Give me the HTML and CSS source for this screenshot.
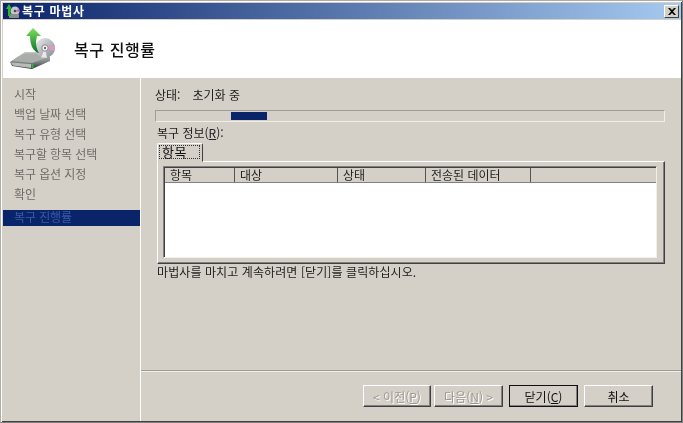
FILE: index.html
```html
<!DOCTYPE html>
<html lang="ko">
<head>
<meta charset="utf-8">
<title>복구 마법사</title>
<link rel="stylesheet" href="styles.css">
</head>
<body>
<div class="window">
  <div class="titlebar">
    <svg class="title-icon" width="16" height="16" viewBox="0 0 16 16">
      <circle cx="11" cy="8" r="4.500" fill="#c4c4ce"/>
      <path d="M11 8l4-2 .5 3z" fill="#c86aa0"/>
      <circle cx="11" cy="8" r="1.300" fill="#4a4a55"/>
      <rect x="5" y="11" width="10" height="4" rx="1" fill="#8a8f88"/>
      <path d="M4 13V6H2l3-5 3 5H6.500v7z" fill="#35b52f"/>
    </svg>
    <span class="title-text">복구 마법사</span>
    <span class="close-btn">
      <svg width="8" height="7" viewBox="0 0 8 7"><path d="M0 0h2l2 2 2-2h2L5 3.500 8 7H6L4 5 2 7H0l3-3.500z" fill="#000"/></svg>
    </span>
  </div>
  <div class="header">
    <svg class="header-icon" width="50" height="50" viewBox="0 0 50 50">
      <defs>
        <linearGradient id="disc" x1="0" y1="0" x2="1" y2="1">
          <stop offset="0" stop-color="#f0f0f2"/>
          <stop offset=".5" stop-color="#b9bbc0"/>
          <stop offset="1" stop-color="#85888e"/>
        </linearGradient>
        <linearGradient id="drive" x1="0" y1="0" x2="0" y2="1">
          <stop offset="0" stop-color="#c4c8c5"/>
          <stop offset=".6" stop-color="#7d8380"/>
          <stop offset="1" stop-color="#2e3234"/>
        </linearGradient>
        <linearGradient id="arrow" x1="0" y1="0" x2="0" y2="1">
          <stop offset="0" stop-color="#7ce05f"/>
          <stop offset="1" stop-color="#0a7424"/>
        </linearGradient>
      </defs>
      <path d="M2 37L17 27H28L42 32V36L24 44 4 41z" fill="url(#drive)"/>
      <path d="M4 36L17 28.500H28L40 32.500 24 38z" fill="#a9aeab"/>
      <path d="M3 37.500L23 39V43L5 40.500z" fill="#b8bcb9"/>
      <rect x="23.500" y="39" width="2" height="4" fill="#2fb53a"/>
      <circle cx="37" cy="23" r="10" fill="url(#disc)"/>
      <path d="M37 23l10-3-.6 6z" fill="#d89cc4"/>
      <path d="M37 23l-4 9.500 6 .3z" fill="#e8e8ea"/>
      <circle cx="37" cy="23" r="3.200" fill="#f5f5f5" stroke="#8a8a8e"/>
      <circle cx="37" cy="23" r="1.200" fill="#6e6e72"/>
      <path d="M25 3L33 11H29C28 16 27 21 31 28 26 27 22 21 22 11H18z" fill="url(#arrow)"/>
    </svg>
    <h1 class="header-title">복구 진행률</h1>
  </div>
  <div class="body">
    <nav class="sidebar">
      <div class="step">시작</div>
      <div class="step">백업 날짜 선택</div>
      <div class="step">복구 유형 선택</div>
      <div class="step">복구할 항목 선택</div>
      <div class="step">복구 옵션 지정</div>
      <div class="step">확인</div>
      <div class="step step-current">복구 진행률</div>
    </nav>
    <main class="content">
      <div class="main-area">
        <div class="status"><span class="status-label">상태:</span><span>초기화 중</span></div>
        <div class="progress"><div class="progress-chunk"></div></div>
        <div class="info-label">복구 정보(<u>R</u>):</div>
        <div class="tabs"><div class="tab"><span class="tab-focus">항목</span></div></div>
        <div class="tab-pane">
          <div class="list">
            <div class="list-head">
              <div class="col col-1">항목</div>
              <div class="col col-2">대상</div>
              <div class="col col-3">상태</div>
              <div class="col col-4">전송된 데이터</div>
              <div class="col col-5"></div>
            </div>
            <div class="list-body"></div>
          </div>
        </div>
        <div class="hint">마법사를 마치고 계속하려면 [닫기]를 클릭하십시오.</div>
      </div>
      <div class="footer">
        <button class="btn btn-back" disabled>&lt; 이전(<u>P</u>)</button>
        <button class="btn" disabled>다음(<u>N</u>) &gt;</button>
        <button class="btn btn-default">닫기(<u>C</u>)</button>
        <button class="btn btn-cancel">취소</button>
      </div>
    </main>
  </div>
</div>
</body>
</html>
```

FILE: styles.css
```css
* { box-sizing: border-box; }
html, body { margin: 0; height: 100%; }
body {
  background: #d4d0c8;
  font-family: "Noto Sans CJK KR", "Liberation Sans", sans-serif;
  font-size: 12px;
  color: #222;
  overflow: hidden;
}
.window {
  width: 683px;
  height: 423px;
  display: flex;
  flex-direction: column;
  padding: 3px 1px 1px 2px;
  background: #d4d0c8;
  border-top: 1px solid #b0aca4;
  border-left: 1px solid #b0aca4;
  border-right: 1px solid #808080;
  border-bottom: 1px solid #808080;
  box-shadow: inset 1px 1px 0 #fff, inset -1px -1px 0 #404040;
  filter: blur(.35px);
}
.titlebar {
  height: 16px;
  margin-top: -1px;
  flex: none;
  display: flex;
  align-items: center;
  padding: 0 2px 0 1px;
  background: linear-gradient(90deg, #0a246a, #a6caf0);
}
.title-icon { flex: none; margin-right: 2px; }
.title-text { color: #fff; font-size: 12px; font-weight: 700; line-height: 16px; letter-spacing: .7px; }
.close-btn {
  margin-left: auto;
  width: 15px;
  height: 13px;
  display: flex;
  align-items: center;
  justify-content: center;
  background: #d4d0c8;
  border: 1px solid;
  border-color: #fff #404040 #404040 #fff;
}
.header {
  height: 58px;
  flex: none;
  background: #fff;
  display: flex;
  align-items: center;
  padding-left: 5px;
  margin-top: 1px;
}
.header-icon { flex: none; margin-right: 16px; margin-top: 2px; }
.header-title { margin: 0; font-size: 16px; font-weight: 500; line-height: 20px; letter-spacing: .6px; color: #111; }
.body { flex: 1; display: flex; min-height: 0; }
.sidebar {
  width: 137px;
  flex: none;
  padding-top: 6px;
  display: flex;
  flex-direction: column;
  color: #6f6d68;
  letter-spacing: -.1px;
}
.step { height: 20px; line-height: 20px; padding-left: 11px; white-space: nowrap; }
.step-current {
  height: 16px;
  line-height: 14px;
  margin-top: 6px;
  background: #0a246a;
  color: #3a5aa8;
}
.content {
  flex: 1;
  min-width: 0;
  display: flex;
  flex-direction: column;
  border-left: 1px solid #fff;
  box-shadow: inset 1px 0 0 #d4d0c8;
}
.main-area { flex: 1; padding: 8px 14px 0 14px; }
.status { display: flex; gap: 12px; height: 18px; line-height: 18px; }
.progress {
  margin-top: 6px;
  height: 12px;
  width: 510px;
  padding: 1px 0 1px 75px;
  border: 1px solid;
  border-color: #a09d96 #f1efe9 #f1efe9 #a09d96;
}
.progress-chunk { width: 36px; height: 100%; background: #0a246a; }
.info-label { margin: 2px 0 0 2px; height: 18px; line-height: 18px; }
.tabs { margin: 1px 0 0 2px; display: flex; height: 18px; position: relative; z-index: 1; }
.tab {
  width: 46px;
  height: 19px;
  padding: 1px 2px 2px 1px;
  background: #d4d0c8;
  border: 1px solid;
  border-color: #fff #404040 #d4d0c8 #fff;
  border-radius: 2px 2px 0 0;
}
.tab-focus {
  display: block;
  height: 14px;
  padding-left: 2px;
  font-size: 13px;
  letter-spacing: .5px;
  line-height: 12px;
  border: 1px dotted #333;
  color: #111;
}
.tab-pane {
  margin-left: 2px;
  width: 508px;
  height: 103px;
  padding: 4px 7px 6px 5px;
  border: 1px solid;
  border-color: #fff #404040 #404040 #fff;
  box-shadow: inset -1px -1px 0 #808080;
}
.list {
  height: 92px;
  display: flex;
  flex-direction: column;
  background: #fff;
  border: 1px solid;
  border-color: #808080 #f1efe9 #f1efe9 #808080;
  box-shadow: inset 1px 1px 0 #404040;
}
.list-head {
  display: flex;
  height: 15px;
  margin: 1px 0 0 1px;
  flex: none;
  background: #d4d0c8;
  border-bottom: 1px solid #808080;
}
.col {
  height: 14px;
  line-height: 13px;
  padding-left: 5px;
  border-right: 1px solid #555;
  white-space: nowrap;
}
.col-1 { width: 70px; }
.col-2 { width: 103px; }
.col-3 { width: 88px; }
.col-4 { width: 105px; }
.col-5 { flex: 1; border-right: 0; }
.list-body { flex: 1; }
.hint { margin-left: 2px; height: 15px; line-height: 15px; white-space: nowrap; letter-spacing: .09px; }
.footer {
  flex: none;
  height: 50px;
  border-top: 1px solid #f1efe9;
  box-shadow: 0 -1px 0 #a09d96;
  display: flex;
  padding: 13px 0 0 222px;
  gap: 3px;
}
.btn {
  width: 69px;
  height: 22px;
  padding: 0;
  font: inherit;
  line-height: 17px;
  color: #111;
  background: #d4d0c8;
  border: 1px solid;
  border-color: #fff #404040 #404040 #fff;
  box-shadow: inset -1px -1px 0 #808080;
}
.btn-back { width: 68px; }
.btn:disabled { color: #9b9992; text-shadow: 1px 1px 0 #fff; }
.btn-default { margin-left: 3px; outline: 1px solid #111; outline-offset: -1px; }
.btn-cancel { margin-left: 3px; }
```
